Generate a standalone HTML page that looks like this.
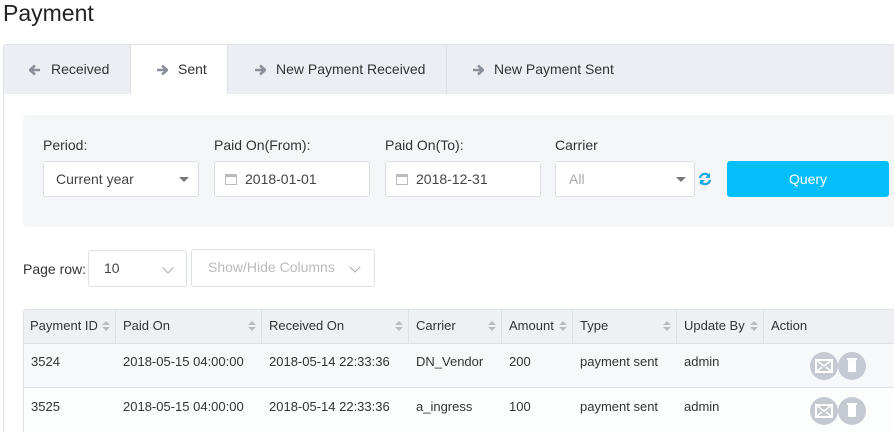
<!DOCTYPE html>
<html><head><style>
*{box-sizing:border-box;margin:0;padding:0}
html,body{width:894px;height:432px;overflow:hidden}
body{background:#fff;font-family:"Liberation Sans",Arial,sans-serif;color:#333;position:relative;font-size:13px}
.a{position:absolute}
.tab{position:absolute;top:45px;height:49px;line-height:49px;font-size:14px;color:#333;border-right:1px solid #dcdfe5;white-space:nowrap}
.tab svg{vertical-align:-2px;margin-right:10px}
.lbl{position:absolute;top:137px;font-size:14px;color:#333}
.inp{position:absolute;top:161px;height:36px;background:#fff;border:1px solid #dcdfe6;border-radius:3px;font-size:14px;line-height:34px;color:#444;white-space:nowrap}
.car{position:absolute;width:0;height:0;border-left:5px solid transparent;border-right:5px solid transparent;border-top:5px solid #777;top:15px}
.cal{position:absolute;left:10px;top:12px;width:12px;height:11px;border:1px solid #bbb;border-top-width:3px}
.th{position:absolute;top:309px;height:34px;line-height:34px;font-size:13px;border-right:1px solid #dde0e6;padding-left:7px;white-space:nowrap}
.so{position:absolute;right:5px;top:12px;width:8px;height:11px}
.so:before{content:"";position:absolute;left:0;top:0;border-left:4px solid transparent;border-right:4px solid transparent;border-bottom:4px solid #bbb}
.so:after{content:"";position:absolute;left:0;top:6px;border-left:4px solid transparent;border-right:4px solid transparent;border-top:4px solid #bbb}
.td{position:absolute;font-size:13px;color:#333}
.ic{position:absolute;width:28px;height:28px;border-radius:50%;background:#c5c9d2}
.chev{position:absolute;top:13px;width:8px;height:8px;border-right:1px solid #aaa;border-bottom:1px solid #aaa;transform:rotate(45deg)}
</style></head><body>
<div class="a" style="left:3px;top:0;font-size:23px;color:#222">Payment</div>
<div class="a" style="left:3px;top:44px;width:891px;height:388px;border:1px solid #dfe1e6;border-bottom:none;border-right:none;border-radius:3px 0 0 0"></div>
<div class="a" style="left:4px;top:45px;width:890px;height:49px;background:#eceef3"></div>
<svg width="0" height="0" style="position:absolute"><defs><g id="r"><path d="M1 6h9M6 1.5l5 4.5-5 4.5" stroke="#8a8f99" stroke-width="2.6" fill="none"/></g></defs></svg>
<div class="tab" style="left:4px;width:127px;padding-left:25px"><svg width="12" height="12" style="transform:scaleX(-1)"><use href="#r"/></svg>Received</div>
<div class="tab" style="left:131px;width:97px;padding-left:25px;background:#fff"><svg width="12" height="12"><use href="#r"/></svg>Sent</div>
<div class="tab" style="left:228px;width:219px;padding-left:26px"><svg width="12" height="12"><use href="#r"/></svg>New Payment Received</div>
<div class="tab" style="left:447px;width:200px;padding-left:25px;border-right:none"><svg width="12" height="12"><use href="#r"/></svg>New Payment Sent</div>
<div class="a" style="left:23px;top:115px;width:871px;height:112px;background:#f5f6f8;border-radius:4px 0 0 4px"></div>
<div class="lbl" style="left:43px">Period:</div>
<div class="lbl" style="left:214px">Paid On(From):</div>
<div class="lbl" style="left:385px">Paid On(To):</div>
<div class="lbl" style="left:555px">Carrier</div>
<div class="inp" style="left:43px;width:156px;padding-left:12px">Current year<div class="car" style="left:135px"></div></div>
<div class="inp" style="left:214px;width:156px;padding-left:30px"><div class="cal"></div>2018-01-01</div>
<div class="inp" style="left:385px;width:156px;padding-left:30px"><div class="cal"></div>2018-12-31</div>
<div class="inp" style="left:555px;width:140px;padding-left:13px;color:#aaa">All<div class="car" style="left:120px"></div></div>
<svg class="a" style="left:698px;top:172px" width="14" height="14" viewBox="0 0 14 14"><path d="M2 6a5 5 0 0 1 9-2M12 8a5 5 0 0 1-9 2" stroke="#1aa7e8" stroke-width="2.2" fill="none"/><path d="M12 1v5h-5zM2 13V8h5z" fill="#1aa7e8"/></svg>
<div class="a" style="left:727px;top:161px;width:162px;height:36px;background:#06bef9;border-radius:3px;color:#fff;text-align:center;line-height:36px;font-size:14px">Query</div>
<div class="a" style="left:23px;top:261px;font-size:14px">Page row:</div>
<div class="inp" style="left:88px;top:250px;width:99px;height:37px;padding-left:15px">10<div class="chev" style="left:75px"></div></div>
<div class="inp" style="left:191px;top:249px;width:184px;height:38px;padding-left:16px;color:#bbb">Show/Hide Columns<div class="chev" style="left:159px"></div></div>
<div class="a" style="left:23px;top:309px;width:871px;height:123px;border:1px solid #dde0e6;border-right:none;border-bottom:none;border-radius:3px 0 0 0"></div>
<div class="a" style="left:24px;top:310px;width:870px;height:33px;background:#eef0f4"></div>
<div class="a" style="left:24px;top:343px;width:870px;height:45px;background:#f7f8fa;border-top:1px solid #dde0e6;border-bottom:1px solid #dde0e6"></div>
<div class="a" style="left:24px;top:388px;width:870px;height:44px;background:#fcfdfd"></div>
<div class="th" style="left:23px;width:93px">Payment ID<div class="so"></div></div>
<div class="th" style="left:116px;width:146px">Paid On<div class="so"></div></div>
<div class="th" style="left:262px;width:147px">Received On<div class="so"></div></div>
<div class="th" style="left:409px;width:93px">Carrier<div class="so"></div></div>
<div class="th" style="left:502px;width:71px">Amount<div class="so"></div></div>
<div class="th" style="left:573px;width:104px">Type<div class="so"></div></div>
<div class="th" style="left:677px;width:87px">Update By<div class="so"></div></div>
<div class="th" style="left:764px;width:130px;border-right:none">Action</div>
<div class="td" style="left:31px;top:354px">3524</div>
<div class="td" style="left:123px;top:354px">2018-05-15 04:00:00</div>
<div class="td" style="left:269px;top:354px">2018-05-14 22:33:36</div>
<div class="td" style="left:416px;top:354px">DN_Vendor</div>
<div class="td" style="left:509px;top:354px">200</div>
<div class="td" style="left:580px;top:354px">payment sent</div>
<div class="td" style="left:684px;top:354px">admin</div>
<div class="td" style="left:31px;top:399px">3525</div>
<div class="td" style="left:123px;top:399px">2018-05-15 04:00:00</div>
<div class="td" style="left:269px;top:399px">2018-05-14 22:33:36</div>
<div class="td" style="left:416px;top:399px">a_ingress</div>
<div class="td" style="left:509px;top:399px">100</div>
<div class="td" style="left:580px;top:399px">payment sent</div>
<div class="td" style="left:684px;top:399px">admin</div>
<div class="ic" style="left:810px;top:352px"><svg class="a" style="left:5px;top:7px" width="18" height="14"><rect x="1" y="1" width="16" height="12" fill="none" stroke="#fff" stroke-width="2"/><path d="M1 1l8 6 8-6M1 13l6-5M17 13l-6-5" stroke="#fff" stroke-width="1.5" fill="none"/></svg></div>
<div class="ic" style="left:838px;top:352px"><div class="a" style="left:10px;top:8px;width:8px;height:12px;background:#fff;border-radius:1px"></div><div class="a" style="left:9px;top:6px;width:10px;height:1.5px;background:#fff"></div></div>
<div class="ic" style="left:810px;top:397px"><svg class="a" style="left:5px;top:7px" width="18" height="14"><rect x="1" y="1" width="16" height="12" fill="none" stroke="#fff" stroke-width="2"/><path d="M1 1l8 6 8-6M1 13l6-5M17 13l-6-5" stroke="#fff" stroke-width="1.5" fill="none"/></svg></div>
<div class="ic" style="left:838px;top:397px"><div class="a" style="left:10px;top:8px;width:8px;height:12px;background:#fff;border-radius:1px"></div><div class="a" style="left:9px;top:6px;width:10px;height:1.5px;background:#fff"></div></div>
</body></html>
